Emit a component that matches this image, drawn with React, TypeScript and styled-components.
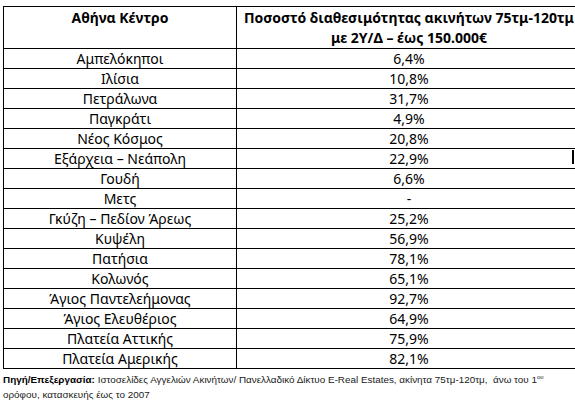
import React from 'react'
import styled, { createGlobalStyle } from 'styled-components'

const GlobalStyle = createGlobalStyle`
  html, body {
    margin: 0;
    padding: 0;
    background: #ffffff;
  }
  body {
    font-family: 'Noto Sans', 'Liberation Sans', Arial, sans-serif;
    color: #000000;
  }
`

const Page = styled('div')`
  position: relative;
  width: 575px;
  height: 405px;
  box-sizing: border-box;
  padding: 6px 3px 0 3px;
`

const Table = styled('table')`
  width: 569px;
  border-collapse: collapse;
  table-layout: fixed;
  font-size: 14px;
`

const HeadCell = styled('th')<{ $width: number }>`
  width: ${(p) => p.$width}px;
  height: 39px;
  padding: 1px 2px 0 2px;
  border: 1px solid #000000;
  font-weight: 700;
  line-height: 20px;
  vertical-align: top;
  text-align: center;
  white-space: nowrap;
`

const Cell = styled('td')`
  height: 19px;
  padding: 0 4px;
  border: 1px solid #000000;
  line-height: 19px;
  text-align: center;
  white-space: nowrap;
`

const Note = styled('p')`
  margin: 3px 0 0 0;
  font-family: 'Liberation Sans', Arial, sans-serif;
  font-size: 9.9px;
  line-height: 15px;
  color: #1a1a1a;
  white-space: nowrap;

  b {
    font-weight: 700;
    color: #000000;
  }

  sup {
    font-size: 6px;
    line-height: 0;
    vertical-align: 4px;
  }
`

const StrayMark = styled('span')`
  position: absolute;
  left: 572px;
  top: 150px;
  width: 2px;
  height: 14px;
  background: #000000;
`

const rows: [string, string][] = [
  ['Αμπελόκηποι', '6,4%'],
  ['Ιλίσια', '10,8%'],
  ['Πετράλωνα', '31,7%'],
  ['Παγκράτι', '4,9%'],
  ['Νέος Κόσμος', '20,8%'],
  ['Εξάρχεια – Νεάπολη', '22,9%'],
  ['Γουδή', '6,6%'],
  ['Μετς', '-'],
  ['Γκύζη – Πεδίον Άρεως', '25,2%'],
  ['Κυψέλη', '56,9%'],
  ['Πατήσια', '78,1%'],
  ['Κολωνός', '65,1%'],
  ['Άγιος Παντελεήμονας', '92,7%'],
  ['Άγιος Ελευθέριος', '64,9%'],
  ['Πλατεία Αττικής', '75,9%'],
  ['Πλατεία Αμερικής', '82,1%'],
]

export default function App() {
  return (
    <Page>
      <GlobalStyle />
      <Table>
        <thead>
          <tr>
            <HeadCell $width={228}>Αθήνα Κέντρο</HeadCell>
            <HeadCell $width={340}>
              Ποσοστό διαθεσιμότητας ακινήτων 75τμ-120τμ
              <br />
              με 2Υ/Δ – έως 150.000€
            </HeadCell>
          </tr>
        </thead>
        <tbody>
          {rows.map(([area, value]) => (
            <tr key={area}>
              <Cell>{area}</Cell>
              <Cell>{value}</Cell>
            </tr>
          ))}
        </tbody>
      </Table>
      <Note>
        <b>Πηγή/Επεξεργασία:</b> Ιστοσελίδες Αγγελιών Ακινήτων/ Πανελλαδικό Δίκτυο E-Real Estates,
        ακίνητα 75τμ-120τμ,&nbsp; άνω του 1<sup>ου</sup>
        <br />
        ορόφου, κατασκευής έως το 2007
      </Note>
      <StrayMark />
    </Page>
  )
}
